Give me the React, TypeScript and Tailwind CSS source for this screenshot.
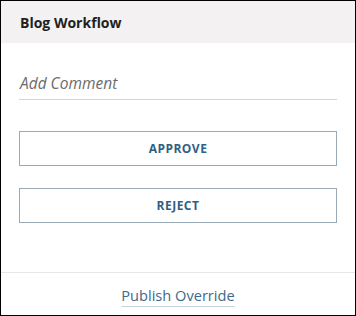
export default function App() {
  return (
    <div
      className="w-[356px] h-[316px] border border-black bg-white flex flex-col text-[14px]"
      style={{ fontFamily: '"Open Sans", "Noto Sans", sans-serif' }}
    >
      <div className="h-[42px] bg-[#f3f1f1] px-[19px] flex items-center font-bold text-[#1f1f1f]">
        Blog Workflow
      </div>

      <div className="flex-1 px-[18px]">
        <div className="mt-[23px] h-[34px] border-b border-[#d4d4d4] flex items-center pt-[3px] px-[1px] italic text-[15.5px] text-[#6b6b6b]">
          Add Comment
        </div>
        <button className="mt-[31px] w-full h-[35px] border border-[#98aab8] text-[#2f5f86] font-bold text-[12px] tracking-[0.04em]">
          APPROVE
        </button>
        <button className="mt-[22px] w-full h-[35px] border border-[#98aab8] text-[#2f5f86] font-bold text-[12px] tracking-[0.04em]">
          REJECT
        </button>
      </div>

      <div className="h-[43px] border-t border-[#e8e8e8] flex items-center justify-center pt-[3px]">
        <a
          href="#"
          className="text-[14.6px] text-[#3d6a8c] underline decoration-[#c5d5e0] underline-offset-[5px]"
        >
          Publish Override
        </a>
      </div>
    </div>
  );
}
